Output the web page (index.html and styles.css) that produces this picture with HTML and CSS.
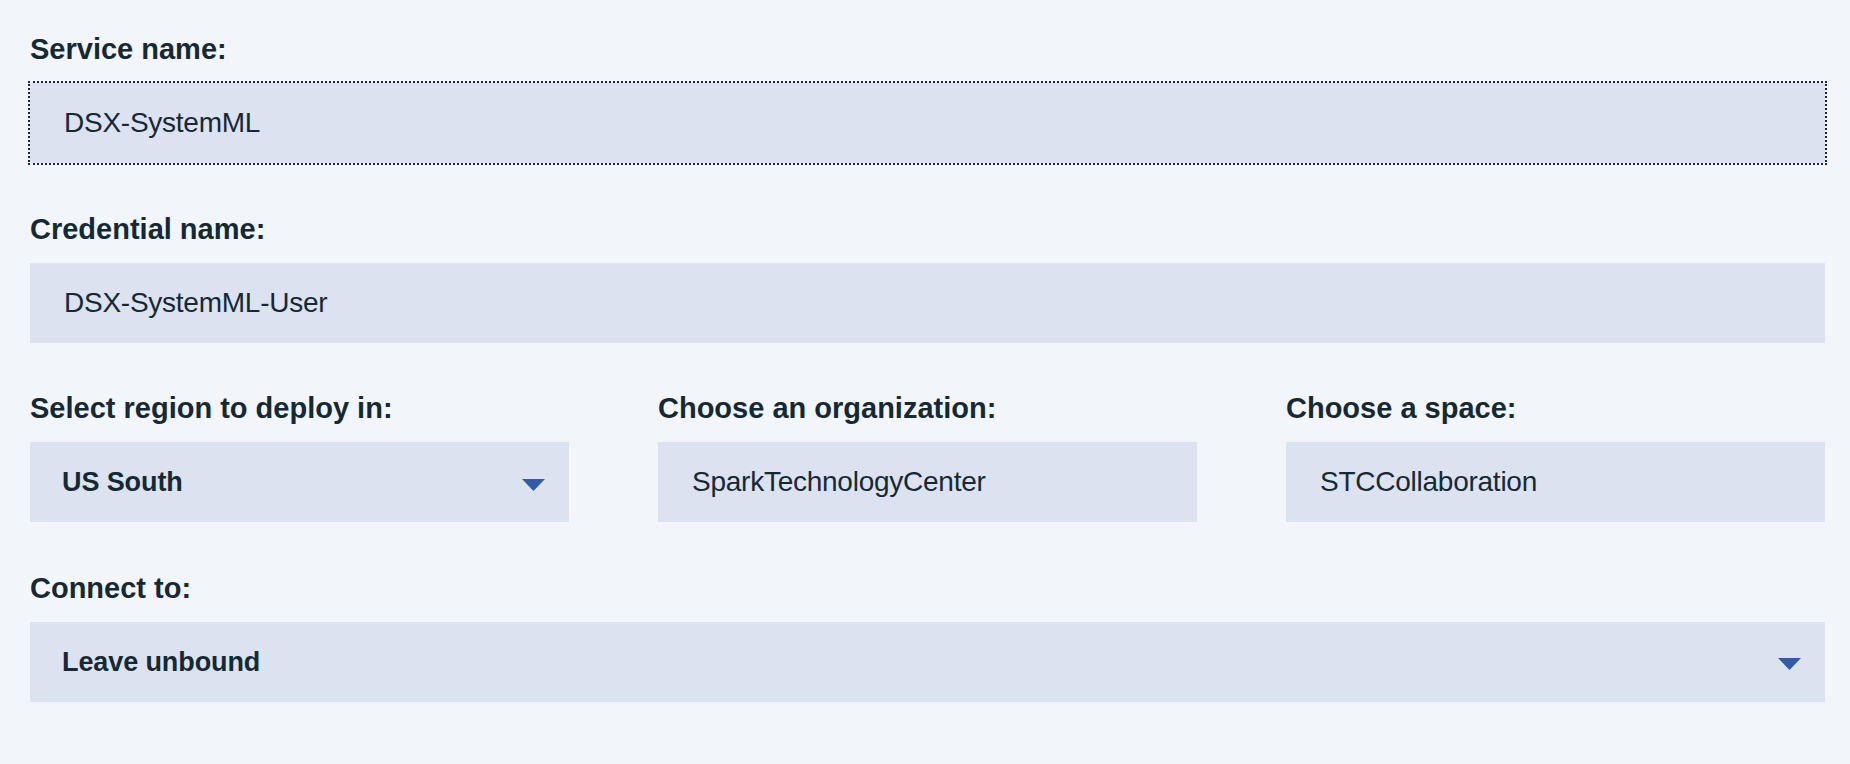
FILE: index.html
```html
<!DOCTYPE html>
<html lang="en">
<head>
<meta charset="utf-8">
<title>Create service</title>
<link rel="stylesheet" href="styles.css">
</head>
<body>
<form class="form">
  <div class="field">
    <label class="label">Service name:</label>
    <div class="box box--focus"><span class="value">DSX-SystemML</span></div>
  </div>
  <div class="field">
    <label class="label">Credential name:</label>
    <div class="box"><span class="value">DSX-SystemML-User</span></div>
  </div>
  <div class="field row">
    <div class="col">
      <label class="label">Select region to deploy in:</label>
      <div class="box box--select">
        <span class="value value--bold">US South</span>
        <svg class="caret" width="23" height="12" viewBox="0 0 23 12"><polygon points="0,0 23,0 11.5,12" /></svg>
      </div>
    </div>
    <div class="col">
      <label class="label">Choose an organization:</label>
      <div class="box"><span class="value">SparkTechnologyCenter</span></div>
    </div>
    <div class="col">
      <label class="label">Choose a space:</label>
      <div class="box"><span class="value">STCCollaboration</span></div>
    </div>
  </div>
  <div class="field">
    <label class="label">Connect to:</label>
    <div class="box box--select">
      <span class="value value--bold">Leave unbound</span>
      <svg class="caret" width="23" height="12" viewBox="0 0 23 12"><polygon points="0,0 23,0 11.5,12" /></svg>
    </div>
  </div>
</form>
</body>
</html>
```

FILE: styles.css
```css
html, body {
  margin: 0;
  padding: 0;
  background: #f2f5fa;
}

body {
  font-family: "Liberation Sans", Arial, Helvetica, sans-serif;
  color: #152935;
  width: 1850px;
  height: 764px;
  overflow: hidden;
}

.form {
  padding: 31px 25px 0 30px;
  display: flex;
  flex-direction: column;
  gap: 47.5px;
}

.field {
  display: flex;
  flex-direction: column;
}

.row {
  display: grid;
  grid-template-columns: repeat(3, 1fr);
  column-gap: 89px;
}

.col {
  display: flex;
  flex-direction: column;
}

.label {
  display: block;
  font-size: 29px;
  font-weight: 700;
  line-height: 36px;
  margin-bottom: 16px;
  white-space: nowrap;
}

.box {
  height: 80px;
  background: #dce2ef;
  display: flex;
  align-items: center;
  padding: 0 24px 0 32px;
  box-sizing: border-box;
}

.box--focus {
  outline: 2px dotted #152935;
}

.box--select {
  justify-content: space-between;
}

.value {
  font-size: 28px;
  letter-spacing: -0.25px;
  line-height: 32px;
  margin-left: 2px;
}

.value--bold {
  font-size: 27px;
  font-weight: 700;
  letter-spacing: -0.1px;
  margin-left: 0;
}

.caret {
  display: block;
  fill: #2f5ca8;
  margin-top: 5px;
}
```
